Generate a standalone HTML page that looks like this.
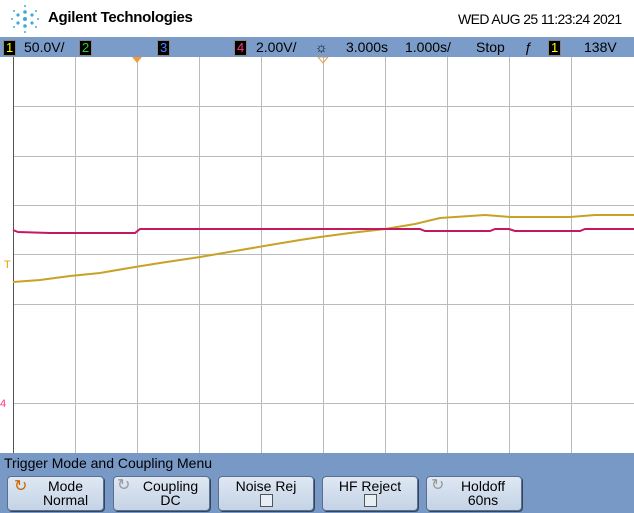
<!DOCTYPE html>
<html><head><style>
body{margin:0;width:634px;height:513px;overflow:hidden;background:#fff;font-family:"Liberation Sans",sans-serif;position:relative}
.a{position:absolute;white-space:nowrap}
.btn{position:absolute;top:476px;height:33px;background:linear-gradient(#dfe8f3,#c4d3e6);border-radius:4px;border:1px solid #5a6f8c;box-shadow:1px 1px 0 #34465f;font-size:14px;text-align:center;line-height:14px;color:#000}
.chk{display:inline-block;width:11px;height:11px;border:1px solid #555;background:#e8eef5;margin-top:1px}
.lbl{position:absolute;top:39px;font-size:14px;color:#000;white-space:nowrap}
.box{display:inline-block;background:#000;border:1px solid #888;padding:0 2px;font-size:13px;line-height:14px}
</style></head><body>
<svg class="a" style="left:8px;top:3px" width="34" height="32" viewBox="0 0 34 32">
<g fill="#3fa9d8">
<circle cx="17" cy="16" r="2"/><circle cx="17" cy="9" r="1.8"/><circle cx="17" cy="23" r="1.8"/><circle cx="10" cy="12" r="1.6"/><circle cx="24" cy="12" r="1.6"/><circle cx="10" cy="20" r="1.6"/><circle cx="24" cy="20" r="1.6"/>
<circle cx="17" cy="3" r="1"/><circle cx="17" cy="29" r="1"/><circle cx="4" cy="16" r="1"/><circle cx="30" cy="16" r="1"/><circle cx="6" cy="8" r="1"/><circle cx="28" cy="8" r="1"/><circle cx="6" cy="24" r="1"/><circle cx="28" cy="24" r="1"/>
</g></svg>
<div class="a" style="left:48px;top:9px;font-size:15px;font-weight:bold;letter-spacing:-0.3px">Agilent Technologies</div>
<div class="a" style="left:458px;top:11px;font-size:14px;letter-spacing:-0.6px">WED AUG 25 11:23:24 2021</div>
<div class="a" style="left:0;top:37px;width:634px;height:20px;background:#7b9cc9"></div>
<div class="lbl" style="left:3px"><span class="box" style="color:#ff0">1</span></div>
<div class="lbl" style="left:24px">50.0V/</div>
<div class="lbl" style="left:79px"><span class="box" style="color:#3c3">2</span></div>
<div class="lbl" style="left:157px"><span class="box" style="color:#48f">3</span></div>
<div class="lbl" style="left:234px"><span class="box" style="color:#f38">4</span></div>
<div class="lbl" style="left:256px">2.00V/</div>
<div class="lbl" style="left:315px">☼</div>
<div class="lbl" style="left:346px">3.000s</div>
<div class="lbl" style="left:405px">1.000s/</div>
<div class="lbl" style="left:476px">Stop</div>
<div class="lbl" style="left:524px;font-style:italic">ƒ</div>
<div class="lbl" style="left:548px"><span class="box" style="color:#ff0">1</span></div>
<div class="lbl" style="left:584px">138V</div>
<svg class="a" style="left:0;top:57px" width="634" height="397">
<g stroke="#bbb" stroke-width="1">
<line x1="75.5" y1="0" x2="75.5" y2="397"/><line x1="137.5" y1="0" x2="137.5" y2="397"/><line x1="199.5" y1="0" x2="199.5" y2="397"/><line x1="261.5" y1="0" x2="261.5" y2="397"/><line x1="323.5" y1="0" x2="323.5" y2="397"/><line x1="385.5" y1="0" x2="385.5" y2="397"/><line x1="447.5" y1="0" x2="447.5" y2="397"/><line x1="509.5" y1="0" x2="509.5" y2="397"/><line x1="571.5" y1="0" x2="571.5" y2="397"/>
<line x1="13" y1="49.5" x2="634" y2="49.5"/><line x1="13" y1="99.5" x2="634" y2="99.5"/><line x1="13" y1="148.5" x2="634" y2="148.5"/><line x1="13" y1="197.5" x2="634" y2="197.5"/><line x1="13" y1="247.5" x2="634" y2="247.5"/><line x1="13" y1="346.5" x2="634" y2="346.5"/>
</g>
<line x1="13.5" y1="0" x2="13.5" y2="397" stroke="#555"/>
<polygon points="132,0 142,0 137,6" fill="#f39a3a"/>
<polygon points="318,0 328,0 323,6" fill="none" stroke="#f39a3a"/>
<polyline fill="none" stroke="#c8a227" stroke-width="2" points="13,225 40,223 70,219 100,216 135,210 160,206 200,200 235,194 270,188 300,183 320,180 350,176 385,172 415,167 440,161 470,159 485,158 510,160 570,160 595,158 634,158"/>
<polyline fill="none" stroke="#c4185f" stroke-width="2" points="13,173 18,175 50,176 73,176 108,176 135,176 140,172 200,172 320,172 420,172 425,174 490,174 495,172 509,172 515,174 580,174 585,172 634,172"/>
<text x="4" y="211" font-size="11" fill="#e4a300">T</text>
<text x="0" y="350" font-size="11" fill="#f38">4</text>
</svg>
<div class="a" style="left:0;top:453px;width:634px;height:60px;background:#7898c6"></div>
<div class="a" style="left:4px;top:455px;font-size:14px">Trigger Mode and Coupling Menu</div>
<div class="btn" style="left:7px;width:95px"><span style="position:absolute;left:6px;top:3px;color:#c60;font-size:16px">↻</span><div style="margin-left:20px;margin-top:2px">Mode<br>Normal</div></div>
<div class="btn" style="left:113px;width:95px"><span style="position:absolute;left:3px;top:2px;color:#999;font-size:16px">↻</span><div style="margin-left:18px;margin-top:2px">Coupling<br>DC</div></div>
<div class="btn" style="left:218px;width:94px"><div style="margin-top:2px">Noise Rej<br><span class="chk"></span></div></div>
<div class="btn" style="left:322px;width:94px"><div style="margin-top:2px">HF Reject<br><span class="chk"></span></div></div>
<div class="btn" style="left:426px;width:94px"><span style="position:absolute;left:4px;top:2px;color:#999;font-size:16px">↻</span><div style="margin-left:18px;margin-top:2px">Holdoff<br>60ns</div></div>
</body></html>
